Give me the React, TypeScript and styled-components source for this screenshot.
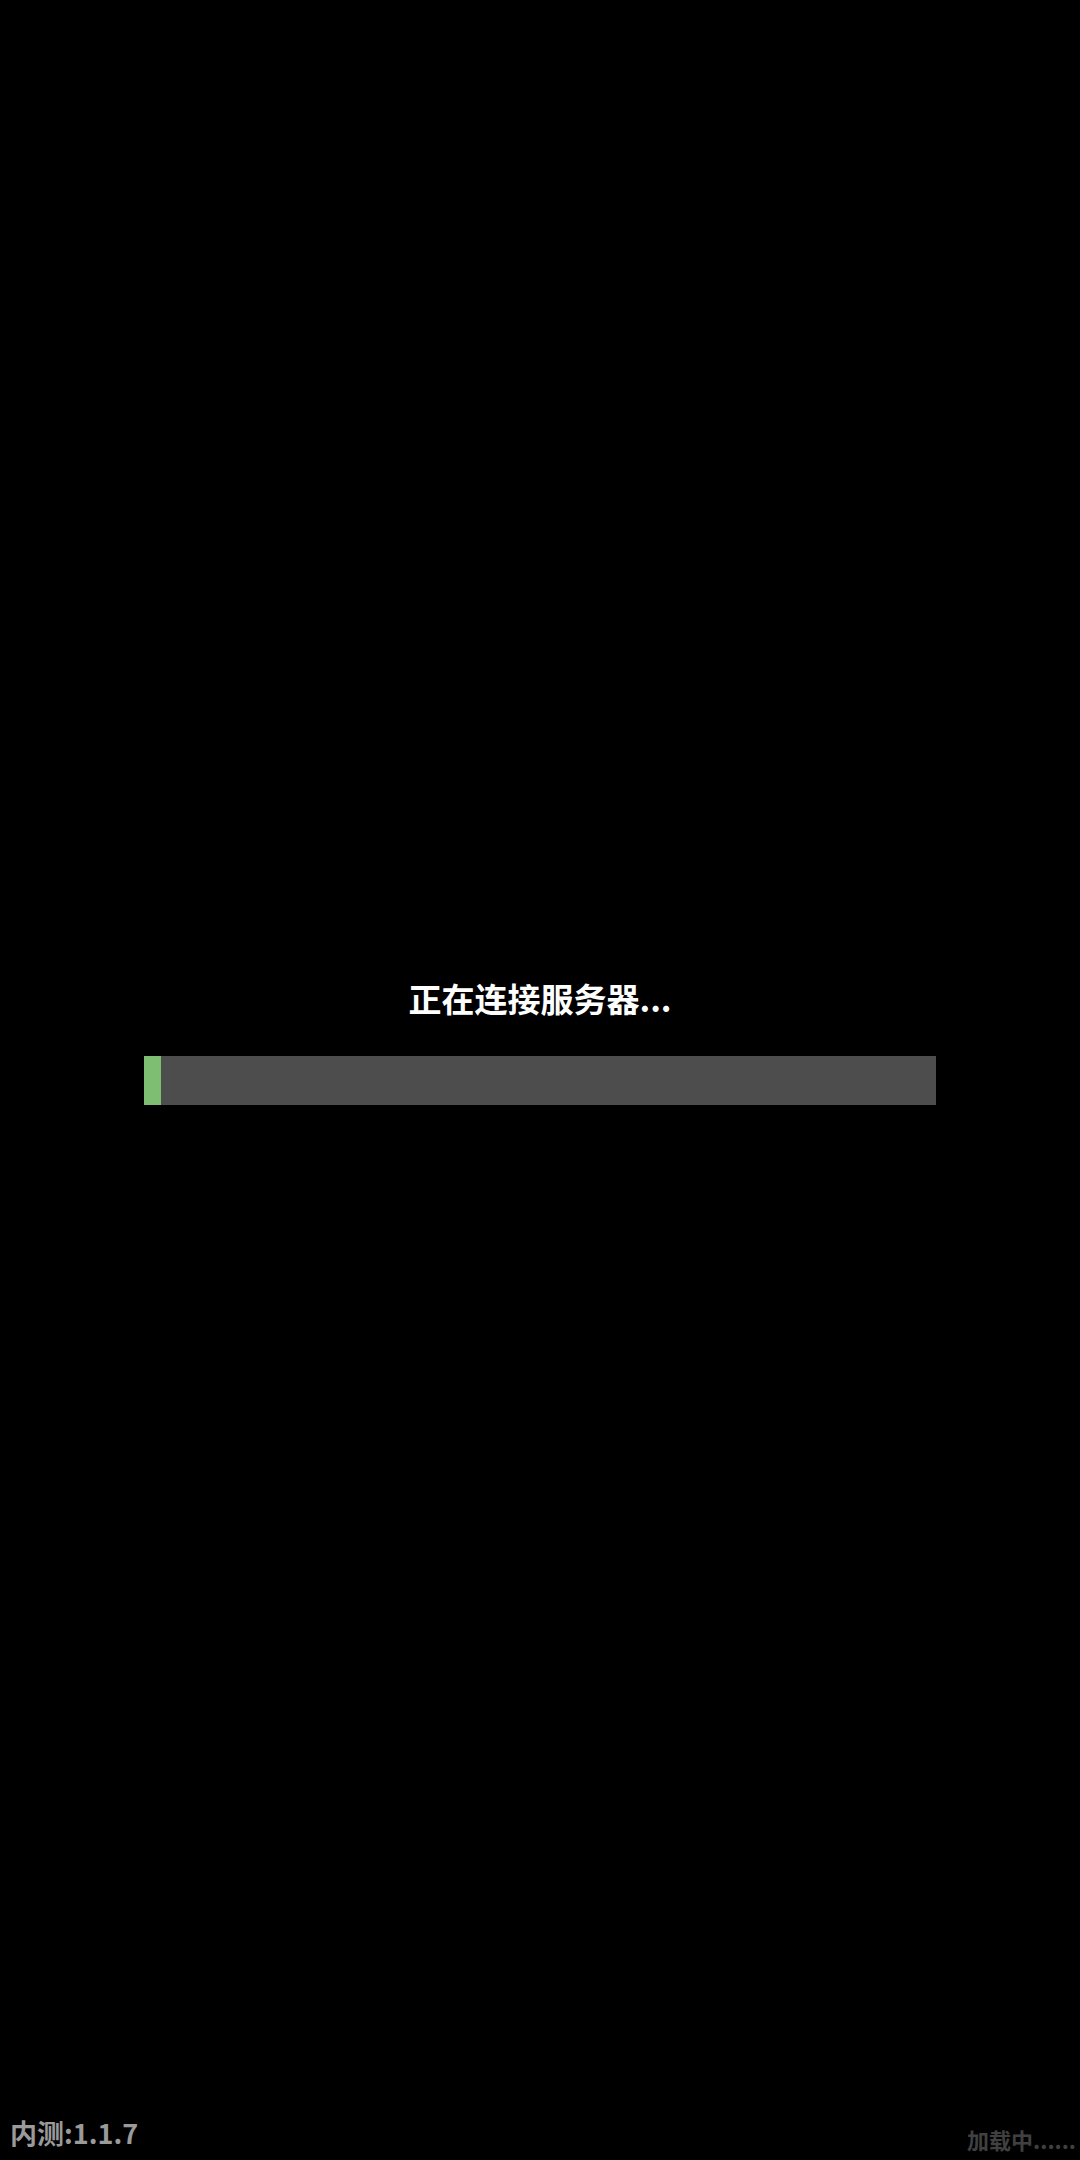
import React from 'react';
import styled, { createGlobalStyle } from 'styled-components';

const GlobalStyle = createGlobalStyle`
  html, body {
    margin: 0;
    padding: 0;
    background: #000;
  }
  body {
    font-family: "Noto Sans CJK SC", "Noto Sans", sans-serif;
  }
`;

const progress = 0.022;

const App = () => {
  return (
    <>
      <GlobalStyle />
      <Screen>
        <TopArea>
          <Title>正在连接服务器...</Title>
        </TopArea>
        <BarTrack>
          <BarFill style={{ width: `${progress * 100}%` }} />
        </BarTrack>
        <BottomArea>
          <Footer>
            <Version>内测:1.1.7</Version>
            <Loading>加载中......</Loading>
          </Footer>
        </BottomArea>
      </Screen>
    </>
  );
};

export default App;

const Screen = styled.div`
  width: 1080px;
  height: 2160px;
  background: #000;
  display: grid;
  grid-template-rows: 1fr 49px 1fr;
  overflow: hidden;
`;

const TopArea = styled.div`
  display: flex;
  flex-direction: column;
  justify-content: flex-end;
  align-items: center;
`;

const Title = styled.div`
  color: #fff;
  font-size: 33px;
  font-weight: 700;
  line-height: 33px;
  margin-bottom: 41px;
  white-space: nowrap;
`;

const BarTrack = styled.div`
  width: 792px;
  height: 49px;
  margin-left: 144px;
  background: #4d4d4d;
  display: flex;
`;

const BarFill = styled.div`
  height: 100%;
  background: #7dbe72;
`;

const BottomArea = styled.div`
  display: flex;
  flex-direction: column;
  justify-content: flex-end;
`;

const Footer = styled.div`
  display: flex;
  justify-content: space-between;
  align-items: flex-end;
  padding: 0 4px 10px 10px;
`;

const Version = styled.div`
  color: #9a9a9a;
  font-size: 27px;
  font-weight: 700;
  line-height: 27px;
  margin-bottom: 4px;
`;

const Loading = styled.div`
  color: #404040;
  font-size: 22px;
  font-weight: 700;
  line-height: 22px;
  white-space: nowrap;
`;
